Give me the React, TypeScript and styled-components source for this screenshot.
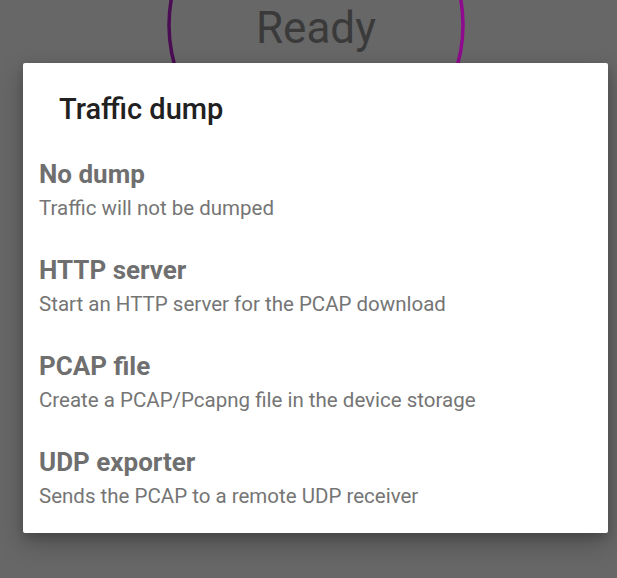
import React from "react";
import styled, { createGlobalStyle } from "styled-components";

const GlobalStyle = createGlobalStyle`
  html, body {
    margin: 0;
    padding: 0;
    width: 617px;
    height: 578px;
    overflow: hidden;
    background: #676767;
    font-family: Roboto, "Liberation Sans", sans-serif;
  }
`;

const Screen = styled.div`
  position: relative;
  width: 617px;
  height: 578px;
  overflow: hidden;
  background: #676767;
`;

const StatusRing = styled.div`
  position: absolute;
  left: 166px;
  top: -125px;
  width: 300px;
  height: 300px;
`;

const ReadyLabel = styled.div`
  position: absolute;
  left: 0;
  right: 0;
  top: 128px;
  text-align: center;
  font-size: 44px;
  line-height: 50px;
  color: #3a3a3a;
  font-weight: 400;
`;

const Backdrop = styled.div`
  position: absolute;
  inset: 0;
  display: flex;
  align-items: flex-start;
  justify-content: flex-start;
  padding: 63px 0 0 23px;
`;

const Dialog = styled.div`
  width: 585px;
  height: 470px;
  box-sizing: border-box;
  background: #ffffff;
  border-radius: 2px;
  box-shadow: 0 10px 24px rgba(0, 0, 0, 0.25), 0 4px 8px rgba(0, 0, 0, 0.15);
  display: flex;
  flex-direction: column;
  padding: 28px 0 8px 0;
`;

const DialogTitle = styled.h2`
  margin: 0 0 14px 0;
  padding-left: 36px;
  font-size: 29px;
  line-height: 36px;
  font-weight: 500;
  color: #212121;
`;

const OptionList = styled.div`
  display: flex;
  flex-direction: column;
`;

const Option = styled.div`
  display: flex;
  flex-direction: column;
  gap: 7px;
  padding: 18px 16px 17px 16px;
`;

const OptionTitle = styled.div`
  font-size: 26px;
  line-height: 31px;
  font-weight: 700;
  color: #6f6f6f;
`;

const OptionSubtitle = styled.div`
  font-size: 20.5px;
  line-height: 23px;
  font-weight: 400;
  color: #757575;
`;

const options = [
  { title: "No dump", subtitle: "Traffic will not be dumped" },
  { title: "HTTP server", subtitle: "Start an HTTP server for the PCAP download" },
  { title: "PCAP file", subtitle: "Create a PCAP/Pcapng file in the device storage" },
  { title: "UDP exporter", subtitle: "Sends the PCAP to a remote UDP receiver" },
];

export default function App() {
  return (
    <>
      <GlobalStyle />
      <Screen>
        <StatusRing>
          <svg width="300" height="300" viewBox="0 0 300 300">
            <defs>
              <linearGradient id="ringGrad" x1="0" y1="0" x2="1" y2="0">
                <stop offset="0" stopColor="#4a0c52" />
                <stop offset="1" stopColor="#8e0a8e" />
              </linearGradient>
            </defs>
            <circle cx="150" cy="150" r="147" fill="none" stroke="url(#ringGrad)" strokeWidth="3.5" />
          </svg>
          <ReadyLabel>Ready</ReadyLabel>
        </StatusRing>
        <Backdrop>
          <Dialog>
            <DialogTitle>Traffic dump</DialogTitle>
            <OptionList>
              {options.map((o) => (
                <Option key={o.title}>
                  <OptionTitle>{o.title}</OptionTitle>
                  <OptionSubtitle>{o.subtitle}</OptionSubtitle>
                </Option>
              ))}
            </OptionList>
          </Dialog>
        </Backdrop>
      </Screen>
    </>
  );
}
